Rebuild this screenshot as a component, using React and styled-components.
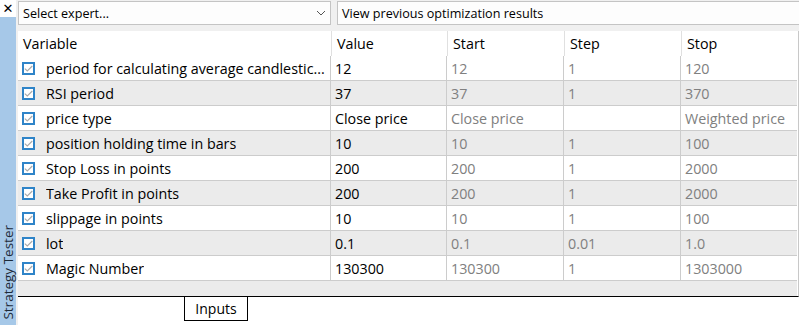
import React from 'react'
import styled, { createGlobalStyle } from 'styled-components'

const GlobalStyle = createGlobalStyle`
  html, body { margin: 0; padding: 0; background: #ffffff; }
  body { font-family: "Open Sans", "Noto Sans", sans-serif; font-size: 14px; }
`

const inputs = [
  { name: 'period for calculating average candlestic...', value: '12', start: '12', step: '1', stop: '120' },
  { name: 'RSI period', value: '37', start: '37', step: '1', stop: '370' },
  { name: 'price type', value: 'Close price', start: 'Close price', step: '', stop: 'Weighted price' },
  { name: 'position holding time in bars', value: '10', start: '10', step: '1', stop: '100' },
  { name: 'Stop Loss in points', value: '200', start: '200', step: '1', stop: '2000' },
  { name: 'Take Profit in points', value: '200', start: '200', step: '1', stop: '2000' },
  { name: 'slippage in points', value: '10', start: '10', step: '1', stop: '100' },
  { name: 'lot', value: '0.1', start: '0.1', step: '0.01', stop: '1.0' },
  { name: 'Magic Number', value: '130300', start: '130300', step: '1', stop: '1303000' },
]

function App() {
  return (
    <>
      <GlobalStyle />
      <Window>
        <SideBar>
          <CloseBox>✕</CloseBox>
          <SideTab>
            <SideLabel>Strategy Tester</SideLabel>
          </SideTab>
        </SideBar>
        <Main>
          <TopBar>
            <Combo>
              <span>Select expert...</span>
              <svg width="10" height="6" viewBox="0 0 10 6">
                <path d="M1 1 L5 5 L9 1" fill="none" stroke="#555" strokeWidth="1" />
              </svg>
            </Combo>
            <Field>View previous optimization results</Field>
          </TopBar>
          <Grid>
            <HeadCell>Variable</HeadCell>
            <HeadCell>Value</HeadCell>
            <HeadCell>Start</HeadCell>
            <HeadCell>Step</HeadCell>
            <HeadCell>Stop</HeadCell>
            {inputs.map((row, i) => (
              <React.Fragment key={row.name}>
                <Cell $odd={i % 2 === 1}>
                  <Check>
                    <svg width="9" height="7" viewBox="0 0 9 7">
                      <path d="M0.8 3.6 L3.3 6 L8.3 1" fill="none" stroke="#a8a8a8" strokeWidth="1.1" />
                    </svg>
                  </Check>
                  <Name>{row.name}</Name>
                </Cell>
                <Cell $odd={i % 2 === 1}>{row.value}</Cell>
                <Cell $odd={i % 2 === 1} $muted>{row.start}</Cell>
                <Cell $odd={i % 2 === 1} $muted>{row.step}</Cell>
                <Cell $odd={i % 2 === 1} $muted>{row.stop}</Cell>
              </React.Fragment>
            ))}
            <Filler />
          </Grid>
          <TabStrip>
            <Tab>Inputs</Tab>
          </TabStrip>
        </Main>
      </Window>
    </>
  )
}

export default App

const Window = styled.div`
  display: flex;
  width: 799px;
  height: 325px;
  overflow: hidden;
  background: #f0f0f0;
  color: #000;
`

const SideBar = styled.div`
  display: flex;
  flex-direction: column;
  width: 16px;
  flex-shrink: 0;
  margin-right: 2px;
`

const CloseBox = styled.div`
  height: 17px;
  background: #ffffff;
  display: flex;
  align-items: center;
  justify-content: center;
  font-family: "DejaVu Sans", sans-serif;
  font-size: 13px;
  line-height: 1;
`

const SideTab = styled.div`
  flex: 1;
  background: #a6c8e8;
  display: flex;
  align-items: flex-end;
  justify-content: center;
  padding-bottom: 5px;
`

const SideLabel = styled.div`
  writing-mode: vertical-rl;
  transform: rotate(180deg);
  font-size: 13.5px;
  line-height: 16px;
  color: #1d2a38;
  white-space: nowrap;
`

const Main = styled.div`
  flex: 1;
  display: flex;
  flex-direction: column;
  min-width: 0;
`

const TopBar = styled.div`
  display: flex;
  gap: 6px;
  height: 31px;
  padding-top: 1px;
  box-sizing: border-box;
`

const Box = styled.div`
  height: 24px;
  box-sizing: border-box;
  border: 1px solid #c4c4c4;
  background: #fdfdfd;
  display: flex;
  align-items: center;
  padding-left: 4px;
  font-size: 12.6px;
  white-space: nowrap;
`

const Combo = styled(Box)`
  width: 313px;
  justify-content: space-between;
  padding-right: 4px;
`

const Field = styled(Box)`
  flex: 1;
  border-right: none;
`

const Grid = styled.div`
  display: grid;
  grid-template-columns: 313px 116px 117px 117px 116px;
  grid-auto-rows: 25px;
  background: #ffffff;
  border-right: 1px solid #c8c8c8;
  height: 266px;
  box-sizing: border-box;
  border-bottom: 1px solid #000;
`

const HeadCell = styled.div`
  display: flex;
  align-items: center;
  padding-left: 5px;
  border-left: 1px solid #e0e0e0;
  &:first-child { border-left: none; }
  font-size: 14.3px;
  white-space: nowrap;
`

const Cell = styled.div`
  display: flex;
  align-items: center;
  gap: 11px;
  padding-left: 4px;
  box-sizing: border-box;
  background: ${p => (p.$odd ? '#ebebeb' : '#ffffff')};
  border-bottom: 1px solid #cccccc;
  border-right: 1px solid #cccccc;
  color: ${p => (p.$muted ? '#808080' : '#000000')};
  font-size: 14.3px;
  white-space: nowrap;
  overflow: hidden;
  &:nth-child(5n) { border-right: none; }
`

const Check = styled.span`
  width: 13px;
  height: 13px;
  box-sizing: border-box;
  border: 2px solid #2f84c8;
  background: #fff;
  display: flex;
  align-items: center;
  justify-content: center;
  flex-shrink: 0;
`

const Name = styled.span`
  overflow: hidden;
  text-overflow: ellipsis;
`

const Filler = styled.div`
  grid-column: 1 / -1;
  background: #ebebeb;
  height: 15px;
`

const TabStrip = styled.div`
  flex: 1;
  background: #ffffff;
  display: flex;
  padding-left: 166px;
  align-items: flex-start;
`

const Tab = styled.div`
  width: 64px;
  height: 24px;
  box-sizing: border-box;
  border: 1px solid #000;
  border-top: none;
  display: flex;
  align-items: center;
  justify-content: center;
  font-size: 14px;
`
